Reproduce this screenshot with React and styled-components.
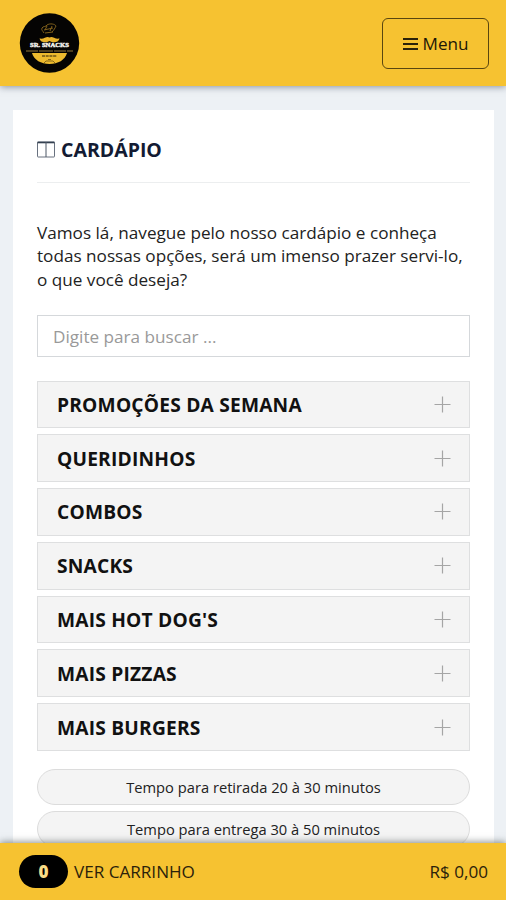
import React from 'react';
import styled, { createGlobalStyle } from 'styled-components';

const categories = [
  'PROMOÇÕES DA SEMANA',
  'QUERIDINHOS',
  'COMBOS',
  'SNACKS',
  "MAIS HOT DOG'S",
  'MAIS PIZZAS',
  'MAIS BURGERS',
];

const times = [
  'Tempo para retirada 20 à 30 minutos',
  'Tempo para entrega 30 à 50 minutos',
];

const GlobalStyle = createGlobalStyle`
  * {
    box-sizing: border-box;
  }
  body {
    margin: 0;
    background: #edf1f5;
    font-family: 'Open Sans', sans-serif;
    color: #222;
  }
`;

const Page = styled.div`
  height: 900px;
  display: flex;
  flex-direction: column;
  overflow: hidden;
`;

const Header = styled.header`
  flex: none;
  height: 86px;
  padding: 0 17px 0 19px;
  display: flex;
  align-items: center;
  justify-content: space-between;
  background: #f6c231;
  box-shadow: 0 1px 7px rgba(60, 70, 90, 0.55);
  z-index: 1;
  svg {
    display: block;
  }
`;

const MenuButton = styled.button`
  width: 107px;
  height: 51px;
  margin-top: 1px;
  padding: 0;
  display: flex;
  align-items: center;
  justify-content: center;
  gap: 5px;
  border: 1px solid #5a460f;
  border-radius: 6px;
  background: transparent;
  color: #1d1706;
  font-family: inherit;
  font-size: 17.1px;
`;

const Content = styled.main`
  flex: 1;
  min-height: 0;
  padding: 24px 12px 0 13px;
`;

const Card = styled.section`
  height: 900px;
  padding: 0 24px;
  background: #fff;
`;

const Title = styled.h1`
  height: 73px;
  margin: 0 0 37.5px;
  padding-top: 7px;
  display: flex;
  align-items: center;
  gap: 6px;
  border-bottom: 1px solid #eceeef;
  font-size: 19.5px;
  font-weight: 700;
  color: #131b33;
`;

const Intro = styled.p`
  margin: 0;
  font-size: 17.15px;
  line-height: 23.5px;
  white-space: nowrap;
`;

const Search = styled.input`
  display: block;
  width: 100%;
  height: 42px;
  margin: 23.5px 0 24px;
  padding: 1px 15px 0;
  border: 1px solid #d5d8db;
  border-radius: 0;
  font-family: inherit;
  font-size: 17.15px;
  &::placeholder {
    color: #999;
    opacity: 1;
  }
`;

const List = styled.div`
  display: grid;
  gap: ${({ $gap }) => $gap}px;
`;

const Category = styled.div`
  height: 47.8px;
  padding: 0 18px 0 19px;
  display: flex;
  align-items: center;
  justify-content: space-between;
  border: 1px solid #dedfe0;
  background: #f4f4f4;
  color: #111;
  font-size: 19.2px;
  line-height: 25px;
  font-weight: 700;
  letter-spacing: 0.2px;
`;

const Times = styled(List)`
  margin-top: 18px;
`;

const Pill = styled.div`
  height: 36px;
  display: flex;
  align-items: center;
  justify-content: center;
  border: 1px solid #dcdcdc;
  border-radius: 18px;
  background: #f4f4f4;
  font-size: 14.7px;
`;

const CartBar = styled.footer`
  flex: none;
  height: 57px;
  padding: 0 18px 0 19px;
  display: flex;
  align-items: center;
  background: #f6c231;
  box-shadow: 0 -1px 7px rgba(60, 70, 70, 0.6);
  color: #2b210a;
  font-size: 17.1px;
  z-index: 1;
`;

const Count = styled.span`
  width: 49px;
  height: 33px;
  margin-right: 6px;
  display: flex;
  align-items: center;
  justify-content: center;
  border-radius: 17px;
  background: #000;
  color: #f9dc87;
  font-weight: 800;
`;

const Total = styled.span`
  margin-left: auto;
`;

const Logo = () => (
  <svg width="61" height="60" viewBox="0 0 61 60">
    <circle cx="30.5" cy="30" r="29.7" fill="#050403" />
    <path
      d="M25 20c-1-2-3-3-2-5 1-2 4-1 5-3 3-2 8-1 9 1-1 2-2 4-4 6M25 17l9-2M26 20l8-1M28 13l-2 4M33 13l-2 5"
      fill="none"
      stroke="#80601c"
      strokeWidth="1"
    />
    <path
      d="M30.5 24.5c3-2 5 2 10 1-1 4-6 5-10 2.5-4 2.5-9 1.5-10-2.5 5 1 7-3 10-1z"
      fill="#e8b22b"
    />
    <path d="M13 40h35c-2 7-9 11-17.5 11S15 47 13 40z" fill="#edba2e" />
    <path d="M7 38h47" stroke="#665229" strokeWidth="1.4" strokeDasharray="12 1 14 1" />
    <text
      x="30.5"
      y="34.3"
      fill="#f7f5f1"
      stroke="#f7f5f1"
      strokeWidth="0.4"
      fontFamily="Liberation Serif, serif"
      fontSize="6.8"
      fontWeight="700"
      textAnchor="middle"
      textLength="39"
      lengthAdjust="spacingAndGlyphs"
    >
      SR. SNACKS
    </text>
    <path d="M23 43h15" stroke="#6d5415" strokeWidth="1.3" strokeDasharray="3 0.7" />
    <path d="M25 50l2-2h7l2 2M29 46.5h3" fill="none" stroke="#7b5e17" strokeWidth="0.9" />
  </svg>
);

const MenuIcon = () => (
  <svg width="15" height="14" viewBox="0 0 15 14">
    <path d="M0 2h15M0 7h15M0 12h15" stroke="#2b2209" strokeWidth="2" />
  </svg>
);

const BookIcon = () => (
  <svg width="18" height="17" viewBox="0 0 18 17">
    <rect x="0.5" y="1" width="17" height="15" rx="0.5" fill="none" stroke="#68717f" />
    <path d="M0.5 1.5h17" stroke="#344050" strokeWidth="1.6" />
    <path d="M9 1v15" stroke="#4c5665" />
  </svg>
);

const PlusIcon = () => (
  <svg width="17" height="17" viewBox="0 0 17 17">
    <path d="M8.5 0.5v16M0.5 8.5h16" stroke="#a5a5a5" strokeWidth="1.2" />
  </svg>
);

const App = () => (
  <>
    <GlobalStyle />
    <Page>
      <Header>
        <Logo />
        <MenuButton>
          <MenuIcon />
          Menu
        </MenuButton>
      </Header>
      <Content>
        <Card>
          <Title>
            <BookIcon />
            CARDÁPIO
          </Title>
          <Intro>
            Vamos lá, navegue pelo nosso cardápio e conheça
            <br />
            todas nossas opções, será um imenso prazer servi-lo,
            <br />o que você deseja?
          </Intro>
          <Search placeholder="Digite para buscar ..." />
          <List $gap={6}>
            {categories.map((name) => (
              <Category key={name}>
                {name}
                <PlusIcon />
              </Category>
            ))}
          </List>
          <Times $gap={6}>
            {times.map((text) => (
              <Pill key={text}>{text}</Pill>
            ))}
          </Times>
        </Card>
      </Content>
      <CartBar>
        <Count>0</Count>
        VER CARRINHO
        <Total>R$ 0,00</Total>
      </CartBar>
    </Page>
  </>
);

export default App;
